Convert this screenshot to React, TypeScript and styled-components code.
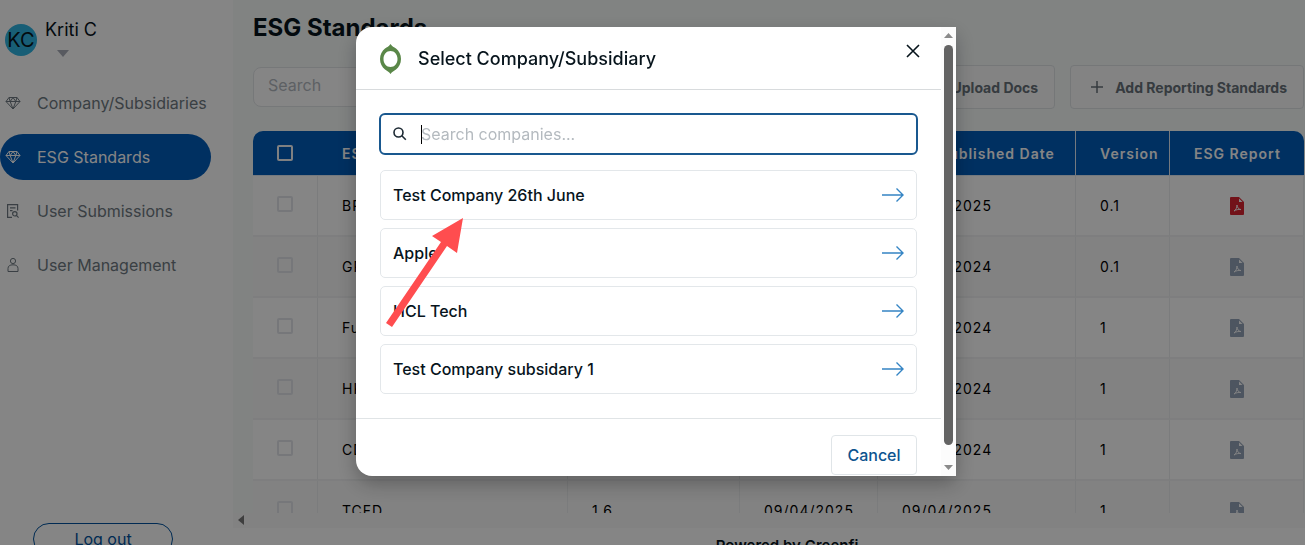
import React from "react";
import styled, { createGlobalStyle } from "styled-components";

const Global = createGlobalStyle`
  * { box-sizing: border-box; }
  html, body, #root { height: 100%; }
  body { margin: 0; overflow: hidden; background: #fff; color: #07141c; font-family: Inter, "Liberation Sans", sans-serif; font-size: 16px; }
  button, input { font-family: inherit; }
`;

const Page = styled.div`display: flex; height: 100vh; overflow: hidden;`;

const Sidebar = styled.aside`
  flex: 0 0 233px; display: flex; flex-direction: column; background: #fff;
`;
const Profile = styled.div`display: flex; align-items: flex-start; gap: 8px; padding: 18px 0 0 5px; height: 76px;`;
const Avatar = styled.div`
  width: 32px; height: 32px; margin-top: 6px; border-radius: 50%; background: #2fb4e2;
  display: flex; align-items: center; justify-content: center; font-size: 20px;
`;
const Person = styled.div`display: flex; flex-direction: column; align-items: flex-start; font-size: 18px; line-height: 24px;`;
const Caret = styled.svg`margin: 8px 0 0 12px;`;
const Nav = styled.nav`display: flex; flex-direction: column; gap: 8px; padding-top: 4px;`;
const NavItem = styled.a<{ $active?: boolean }>`
  display: flex; align-items: center; gap: 16px; width: 211px; height: 46px; padding-left: 5px;
  border-radius: 23px; font-size: 16px; text-decoration: none; white-space: nowrap;
  color: ${p => (p.$active ? "#fff" : "#6f7a82")};
  background: ${p => (p.$active ? "#005cba" : "transparent")};
  svg { flex: none; }
`;
const Logout = styled.button`
  flex: none; width: 140px; height: 32px; margin: auto 0 -10px 33px; border: 1px solid #00529f; border-radius: 16px;
  background: transparent; color: #00529f; font-size: 16px;
`;

const Main = styled.main`flex: 1; min-width: 0; display: flex; flex-direction: column; background: #fff;`;
const Content = styled.div`height: 513px; flex: none; overflow: hidden; padding: 12px 1px 0 20px; background: #f7fbfa;`;
const Title = styled.h1`margin: 0; font-size: 24px; line-height: 32px; font-weight: 700;`;
const Tools = styled.div`display: flex; align-items: center; gap: 15px; margin: 21px 0 22px;`;
const Search = styled.input`
  width: 260px; height: 40px; margin-right: auto; padding: 0 14px 4px; border: 1px solid #e3e6e8; border-radius: 8px;
  background: #fff; font-size: 16px; &::placeholder { color: #b3b9bf; opacity: 1; }
`;
const ToolButton = styled.button`
  display: flex; align-items: center; gap: 12px; height: 44px; padding: 0 16px 0 20px; border: 1px solid #e0e4e6;
  border-radius: 4px; background: #fbfcfc; color: #68727a; font-size: 14px; font-weight: 700; white-space: nowrap;
`;
const Table = styled.table`
  width: 100%; table-layout: fixed; border-collapse: separate; border-spacing: 0; font-size: 14px;
`;
const Th = styled.th`
  height: 45px; padding: 0 0 0 24px; background: #005cba; color: #fff; text-align: left; font-weight: 600;
  letter-spacing: 1px; white-space: nowrap; border-right: 1px solid #dfe9f4; border-bottom: 1px solid #dfe9f4;
  &:first-child { border-radius: 10px 0 0 0; border-right: 0; }
  &:last-child { border-radius: 0 10px 0 0; border-right: 0; }
`;
const Td = styled.td`
  height: 61px; padding: 0 0 0 24px; color: #000; letter-spacing: 1px; white-space: nowrap;
  border-right: 1px solid #eceeef; border-bottom: 2px solid #f1f2f3;
`;
const Tr = styled.tr<{ $alt: boolean }>`background: ${p => (p.$alt ? "#fafafa" : "#fff")};`;
const Tick = styled.input`
  appearance: none; display: block; width: 16px; height: 16px; margin: 0 0 4px; border: 2px solid #e2e5ea; border-radius: 2px;
  th & { border-color: #f3f5f8; margin: 0; }
`;
const Report = styled.svg`display: block; margin-left: 36px;`;
const HScroll = styled.div`height: 15px; flex: none; padding: 2px 5px; background: #fafafa; line-height: 0;`;
const Footer = styled.footer`
  display: flex; justify-content: center; padding: 8px 0 0 36px;
  font-size: 15px; line-height: 20px; font-weight: 600; white-space: nowrap;
`;

const Overlay = styled.div`
  position: fixed; inset: 0; display: flex; justify-content: center; padding: 27px 0 69px 7px; background: rgba(0,0,0,0.48);
`;
const Dialog = styled.section`
  display: flex; width: 600px; overflow: hidden; border-radius: 16px 0 0 16px; background: #fff;
  box-shadow: 0 8px 20px rgba(0,0,0,0.28);
`;
const Pane = styled.div`flex: 1; min-width: 0;`;
const Head = styled.header`
  display: flex; align-items: center; height: 63px; padding: 1px 20px 0 24px; border-bottom: 1px solid #d8dbdd;
`;
const Heading = styled.h2`flex: 1; margin: 0 0 0 17px; font-size: 18px; line-height: 24px; font-weight: 500;`;
const Close = styled.button`
  width: 16px; height: 16px; margin-bottom: 15px; padding: 0; border: 0; background: none; display: flex; color: #07141c;
`;
const Body = styled.div`padding: 23px 23px 24px 23px;`;
const Field = styled.label`
  display: flex; align-items: center; gap: 14px; height: 42px; padding: 0 12px 0 12px; border: 2px solid #19588f; border-radius: 6px; margin-bottom: 15px;
`;
const Query = styled.input`
  flex: 1; min-width: 0; border: 0; outline: 0; padding: 0; background: none; font-size: 16px; color: #07141c;
  &::placeholder { color: #b4babf; opacity: 1; }
`;
const Cursor = styled.span`width: 1px; height: 19px; margin-right: -15px; background: #000;`;
const List = styled.div`display: flex; flex-direction: column; gap: 8px; padding: 0 1px;`;
const Company = styled.button`
  display: flex; align-items: center; justify-content: space-between; height: 50px; padding: 0 12px 1px 12px;
  border: 1px solid #e3e7ea; border-radius: 5px; background: #fff; color: #07141c; font-size: 16px; font-weight: 450;
`;
const Foot = styled.footer`display: flex; justify-content: flex-end; padding: 16px 24px 0; border-top: 1px solid #e0e4e6;`;
const Cancel = styled.button`
  width: 86px; height: 40px; padding: 0; border: 1px solid #e0e5e8; border-radius: 4px; background: #fff; color: #0d548f; font-size: 16px; font-weight: 500;
`;
const Scrollbar = styled.div`
  flex: 0 0 15px; display: flex; flex-direction: column; align-items: center; justify-content: space-between; padding: 6px 0; background: #fcfcfc;
`;
const Thumb = styled.div`width: 9px; flex: 1; margin: 7px 0 20px; border-radius: 5px; background: #636363;`;
const Pointer = styled.svg`position: fixed; left: 380px; top: 212px;`;

const Gem = () => (
  <svg width="16" height="16" viewBox="0 0 16 16" fill="none" stroke="currentColor" strokeWidth="1" strokeLinejoin="round">
    <path d="M4 2.5h8L15 6.5 8 14 1 6.5zM1 6.5h14M4 2.5l1.2 4L8 14l2.8-7.5L12 2.5M5.2 6.5 8 2.5l2.8 4" />
  </svg>
);
const Doc = () => (
  <svg width="16" height="16" viewBox="0 0 16 16" fill="none" stroke="currentColor" strokeWidth="1.2">
    <path d="M7 14.4H2.6V1.600h10v6M5 4.800h5.500M5 7.600h2.500" /><circle cx="9.800" cy="10.800" r="2.200" /><path d="m11.400 12.400 2.200 2.200" />
  </svg>
);
const User = () => (
  <svg width="16" height="16" viewBox="0 0 16 16" fill="none" stroke="currentColor" strokeWidth="1">
    <circle cx="8" cy="4" r="2.600" /><path d="M3 14.500v-3C3 9 4.800 7.800 8 7.800s5 1.200 5 3.700v3z" strokeLinejoin="round" />
  </svg>
);
const Pdf = ({ red }: { red: boolean }) => (
  <Report width="14" height="18" viewBox="0 0 14 18" role="img" aria-label="PDF report">
    <path d="M1 0h8l5 5v12a1 1 0 0 1-1 1H1a1 1 0 0 1-1-1V1a1 1 0 0 1 1-1z" fill={red ? "#da2430" : "#94a3b8"} />
    <path d="M9 1.500v3.500h3.500z" fill="#fff" />
    <path d="M4 14c1.800-1 3-3.200 3-6 .2 2.600 1.400 4 4 4.600-2.600-.4-5 .1-7 1.400z" fill="none" stroke="#fff" strokeWidth=".9" strokeLinejoin="round" />
  </Report>
);
const Arrow = () => (
  <svg width="22" height="16" viewBox="0 0 22 16" fill="none" stroke="#3484c4" strokeWidth="1.4"><path d="M0 8h21M14.500 1.500 21 8l-6.500 6.500" /></svg>
);

const rows = [
  ["BRSR", "1.0", "09/04/2025", "09/04/2025", "0.1"],
  ["GRI", "1.0", "09/04/2024", "09/04/2024", "0.1"],
  ["Full Standard", "1.0", "09/04/2024", "09/04/2024", "1"],
  ["HKEX", "1.0", "09/04/2024", "09/04/2024", "1"],
  ["CDP", "1.0", "09/04/2024", "09/04/2024", "1"],
  ["TCFD", "1.6", "09/04/2025", "09/04/2025", "1"],
];
const companies = ["Test Company 26th June", "Apple", "HCL Tech", "Test Company subsidary 1"];

export default function App() {
  return (
    <>
      <Global />
      <Page>
        <Sidebar>
          <Profile>
            <Avatar>KC</Avatar>
            <Person>Kriti C<Caret width="12" height="7" viewBox="0 0 12 7"><path d="M0 0h12L6 7z" fill="#a9adb8" /></Caret></Person>
          </Profile>
          <Nav>
            <NavItem href="#companies"><Gem />Company/Subsidiaries</NavItem>
            <NavItem href="#standards" $active><Gem />ESG Standards</NavItem>
            <NavItem href="#submissions"><Doc />User Submissions</NavItem>
            <NavItem href="#users"><User />User Management</NavItem>
          </Nav>
          <Logout>Log out</Logout>
        </Sidebar>
        <Main>
          <Content>
            <Title>ESG Standards</Title>
            <Tools>
              <Search placeholder="Search" aria-label="Search standards" />
              <ToolButton>Upload Docs</ToolButton>
              <ToolButton>
                <svg width="12" height="12" viewBox="0 0 12 12" stroke="currentColor" strokeWidth="1.5"><path d="M6 0v12M0 6h12" /></svg>
                Add Reporting Standards
              </ToolButton>
            </Tools>
            <Table>
              <colgroup>
                <col style={{ width: 65 }} /><col /><col style={{ width: 172 }} /><col style={{ width: 138 }} />
                <col style={{ width: 198 }} /><col style={{ width: 94 }} /><col style={{ width: 134 }} />
              </colgroup>
              <thead>
                <tr>
                  <Th><Tick type="checkbox" aria-label="Select all" /></Th>
                  <Th>ESG Standard</Th><Th>Standard Version</Th><Th>Created Date</Th><Th>Last Published Date</Th><Th>Version</Th><Th>ESG Report</Th>
                </tr>
              </thead>
              <tbody>
                {rows.map((r, i) => (
                  <Tr key={r[0]} $alt={i % 2 === 1}>
                    <Td><Tick type="checkbox" aria-label={`Select ${r[0]}`} /></Td>
                    {r.map((c, j) => <Td key={j}>{c}</Td>)}
                    <Td><Pdf red={i === 0} /></Td>
                  </Tr>
                ))}
              </tbody>
            </Table>
          </Content>
          <HScroll><svg width="6" height="10" viewBox="0 0 6 10"><path d="M6 0v10L0 5z" fill="#777" /></svg></HScroll>
          <Footer>Powered by Greenfi</Footer>
        </Main>
      </Page>
      <Overlay>
        <Dialog role="dialog" aria-modal="true" aria-labelledby="dialog-title">
          <Pane>
            <Head>
              <svg width="21" height="30" viewBox="0 0 21 30"><path fillRule="evenodd" fill="#5a8748" d="M10.500 0C12 2.500 14 3 16 4.500c3 2.500 5 6 5 10.500s-2 8-5 10.500c-2 1.500-4 2-5.500 4.500C9 27.500 7 27 5 25.500 2 23 0 19.500 0 15S2 7 5 4.500C7 3 9 2.500 10.500 0zm0 7C6.500 7 3.500 10.500 3.500 15s3 8 7 8 7-3.500 7-8-3-8-7-8z" /></svg>
              <Heading id="dialog-title">Select Company/Subsidiary</Heading>
              <Close aria-label="Close"><svg width="16" height="16" viewBox="0 0 16 16" stroke="currentColor" strokeWidth="1.6"><path d="m2 2 12 12M14 2 2 14" /></svg></Close>
            </Head>
            <Body>
              <Field>
                <svg width="14" height="14" viewBox="0 0 14 14" fill="none" stroke="#1c2933" strokeWidth="1.6"><circle cx="5.500" cy="5.500" r="4.500" /><path d="m8.800 8.800 4 4" /></svg>
                <Cursor />
                <Query placeholder="Search companies..." aria-label="Search companies" />
              </Field>
              <List>{companies.map(c => <Company key={c}>{c}<Arrow /></Company>)}</List>
            </Body>
            <Foot><Cancel>Cancel</Cancel></Foot>
          </Pane>
          <Scrollbar aria-hidden="true">
            <svg width="9" height="5" viewBox="0 0 9 5"><path d="M0 5h9L4.500 0z" fill="#8a8a8a" /></svg>
            <Thumb />
            <svg width="9" height="5" viewBox="0 0 9 5"><path d="M0 0h9L4.500 5z" fill="#8a8a8a" /></svg>
          </Scrollbar>
        </Dialog>
      </Overlay>
      <Pointer width="86" height="118" viewBox="0 0 86 118" aria-hidden="true">
        <path d="M83 6 52 24l9 6L6 111l6 4 55-81 10 7z" fill="#ff4d4f" />
      </Pointer>
    </>
  );
}
